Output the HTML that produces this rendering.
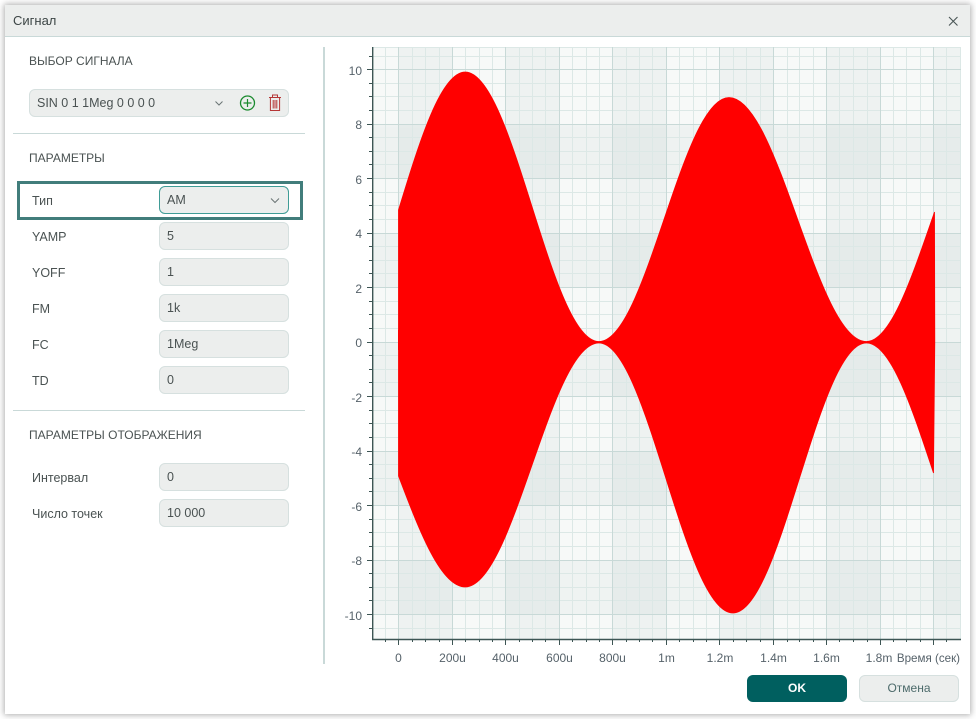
<!DOCTYPE html>
<html lang="ru"><head><meta charset="utf-8"><title>Сигнал</title>
<style>
html,body{margin:0;padding:0;width:976px;height:719px;overflow:hidden;background:#fff;font-family:"Liberation Sans",sans-serif;color:#3d4646;font-size:12.5px}
.win{position:absolute;left:5px;top:5px;width:965px;height:709px;background:#fff;box-shadow:0 0 6px 1px rgba(0,0,0,.32)}
.a{position:absolute}
.title{position:absolute;left:5px;top:5px;width:965px;height:31px;background:#eceeed;border-bottom:1px solid #c9d9d8;box-sizing:content-box}
.t{position:absolute;line-height:16px;white-space:nowrap}
.h{position:absolute;left:29px;line-height:16px;font-size:12px;color:#4a5252;white-space:nowrap}
.f{position:absolute;left:159px;width:130px;height:28px;box-sizing:border-box;background:#eceeed;border:1px solid #d6e0df;border-radius:6px;line-height:27px;padding-left:7px;color:#4a5252}
.l{position:absolute;left:32px;line-height:16px;color:#4a5252;white-space:nowrap}
.d{position:absolute;left:13px;width:292px;height:1px;background:#c9d9d8}
svg{position:absolute;left:0;top:0}
svg text{font-family:"Liberation Sans",sans-serif;font-size:12px;fill:#56626a}
</style></head><body>
<div class="win"></div>
<div class="title"></div>
<div class="t" style="left:13px;top:13px;font-size:13px">Сигнал</div>

<div class="h" style="top:53px">ВЫБОР СИГНАЛА</div>
<div class="f" style="left:29px;top:89px;width:260px">SIN 0 1 1Meg 0 0 0 0</div>
<div class="d" style="top:133px"></div>
<div class="h" style="top:150px">ПАРАМЕТРЫ</div>
<div class="a" style="left:17px;top:181px;width:286px;height:39px;box-sizing:border-box;border:3px solid #417d7b"></div>
<div class="l" style="top:193px">Тип</div>
<div class="f" style="top:186px;border-color:#3f9c96">AM</div>
<div class="l" style="top:229px">YAMP</div><div class="f" style="top:222px">5</div>
<div class="l" style="top:265px">YOFF</div><div class="f" style="top:258px">1</div>
<div class="l" style="top:301px">FM</div><div class="f" style="top:294px">1k</div>
<div class="l" style="top:337px">FC</div><div class="f" style="top:330px">1Meg</div>
<div class="l" style="top:373px">TD</div><div class="f" style="top:366px">0</div>
<div class="d" style="top:410px"></div>
<div class="h" style="top:427px">ПАРАМЕТРЫ ОТОБРАЖЕНИЯ</div>
<div class="l" style="top:470px">Интервал</div><div class="f" style="top:463px">0</div>
<div class="l" style="top:506px">Число точек</div><div class="f" style="top:499px">10 000</div>
<div class="a" style="left:323px;top:47px;width:2px;height:617px;background:#c9d9d8"></div>

<div class="a" style="left:747px;top:675px;width:100px;height:27px;background:#005f5f;border-radius:6px;color:#fff;font-weight:bold;font-size:12px;text-align:center;line-height:27px">OK</div>
<div class="a" style="left:859px;top:675px;width:100px;height:27px;box-sizing:border-box;background:#eceeed;border:1px solid #d6e0df;border-radius:6px;color:#4d6b6b;font-size:12px;text-align:center;line-height:25px">Отмена</div>

<svg width="976" height="719" viewBox="0 0 976 719">
<!-- close -->
<path d="M949 17L957.5 25.5M957.5 17L949 25.5" stroke="#4a5656" stroke-width="1.1" fill="none"/>
<!-- chevrons -->
<path d="M215.5 101.5L219 105L222.5 101.5" stroke="#6a7474" stroke-width="1" fill="none"/>
<path d="M271 198.5L275 202.5L279 198.5" stroke="#6a7474" stroke-width="1" fill="none"/>
<!-- plus -->
<circle cx="247.5" cy="103" r="7" stroke="#1a8a2e" stroke-width="1.3" fill="none"/>
<path d="M247.5 99V107M243.5 103H251.5" stroke="#1a8a2e" stroke-width="1.2" fill="none"/>
<!-- trash -->
<path d="M269 97.5H281M272.5 97V95H277.5V97M270.4 98V110.5H279.6V98M273.2 100V108.5M275 100V108.5M276.8 100V108.5" stroke="#b53636" stroke-width="1" fill="none"/>

<!-- plot bg -->
<rect x="373" y="47" width="588" height="592" fill="#f7f9f8"/>
<g fill="#0a3a3a" opacity=".032">
<rect x="398" y="47" width="54" height="592"/><rect x="505" y="47" width="54" height="592"/><rect x="612" y="47" width="54" height="592"/><rect x="719" y="47" width="54" height="592"/><rect x="826" y="47" width="54" height="592"/><rect x="933" y="47" width="28" height="592"/>
</g>
<g fill="#0a3a3a" opacity=".032">
<rect x="373" y="124" width="588" height="54"/><rect x="373" y="233" width="588" height="54"/><rect x="373" y="342" width="588" height="54"/><rect x="373" y="451" width="588" height="54"/><rect x="373" y="560" width="588" height="54"/>
</g>
<!-- minor grid -->
<path stroke="#dce8e6" stroke-width="1" fill="none" d="M385.5 47v592M412.5 47v592M425.5 47v592M439.5 47v592M465.5 47v592M479.5 47v592M492.5 47v592M519.5 47v592M532.5 47v592M545.5 47v592M572.5 47v592M586.5 47v592M599.5 47v592M626.5 47v592M639.5 47v592M652.5 47v592M679.5 47v592M693.5 47v592M706.5 47v592M733.5 47v592M746.5 47v592M760.5 47v592M787.5 47v592M799.5 47v592M813.5 47v592M839.5 47v592M853.5 47v592M867.5 47v592M893.5 47v592M906.5 47v592M920.5 47v592M946.5 47v592M960.5 47v592
M373 47.5h588M373 56.5h588M373 83.5h588M373 96.5h588M373 110.5h588M373 137.5h588M373 151.5h588M373 164.5h588M373 192.5h588M373 205.5h588M373 219.5h588M373 246.5h588M373 260.5h588M373 273.5h588M373 301.5h588M373 314.5h588M373 328.5h588M373 355.5h588M373 369.5h588M373 382.5h588M373 410.5h588M373 423.5h588M373 437.5h588M373 464.5h588M373 478.5h588M373 491.5h588M373 519.5h588M373 532.5h588M373 546.5h588M373 573.5h588M373 587.5h588M373 600.5h588M373 628.5h588"/>
<!-- major grid -->
<path stroke="#c8d9d7" stroke-width="1" fill="none" d="M398.5 47v592M452.5 47v592M505.5 47v592M559.5 47v592M612.5 47v592M666.5 47v592M719.5 47v592M773.5 47v592M826.5 47v592M880.5 47v592M933.5 47v592
M373 69.5h588M373 124.5h588M373 178.5h588M373 233.5h588M373 287.5h588M373 342.5h588M373 396.5h588M373 451.5h588M373 505.5h588M373 560.5h588M373 614.5h588"/>
<!-- signal -->
<path fill="#ff0000" stroke="#ff0000" stroke-width=".8" d="M398.5 210C420.1 139.3 441 72 465.2 72C513.9 72 550.2 341.5 598.9 341.5C646.3 341.5 681.6 97.5 729 97.5C779 97.5 816.4 341.5 866.4 341.5C890.6 341.5 911.4 278.6 934.5 212L934.8 342L933.5 473C911.4 406.4 890.6 343 866.4 343C817.7 343 781.3 613 733 613C683.9 613 647.6 343 598.9 343C550.2 343 513.9 587 465.2 587C441 587 420.1 532.9 398.5 476Z"/>
<rect x="398" y="330" width="1" height="20" fill="#ff0000"/>
<!-- axes -->
<path stroke="#3d5554" stroke-width="1.4" fill="none" d="M372.7 47V639.6M372 639.5H961"/>
<path stroke="#3d5554" stroke-width="1" fill="none" d="M367 69.5h6M367 124.5h6M367 178.5h6M367 233.5h6M367 287.5h6M367 342.5h6M367 396.5h6M367 451.5h6M367 505.5h6M367 560.5h6M367 614.5h6
M369 56.5h4M369 83.5h4M369 96.5h4M369 110.5h4M369 137.5h4M369 151.5h4M369 164.5h4M369 192.5h4M369 205.5h4M369 219.5h4M369 246.5h4M369 260.5h4M369 273.5h4M369 301.5h4M369 314.5h4M369 328.5h4M369 355.5h4M369 369.5h4M369 382.5h4M369 410.5h4M369 423.5h4M369 437.5h4M369 464.5h4M369 478.5h4M369 491.5h4M369 519.5h4M369 532.5h4M369 546.5h4M369 573.5h4M369 587.5h4M369 600.5h4M369 628.5h4
M398.5 639v6M452.5 639v6M505.5 639v6M559.5 639v6M612.5 639v6M666.5 639v6M719.5 639v6M773.5 639v6M826.5 639v6M880.5 639v6M933.5 639v6
M385.5 639v3M412.5 639v3M425.5 639v3M439.5 639v3M465.5 639v3M479.5 639v3M492.5 639v3M519.5 639v3M532.5 639v3M545.5 639v3M572.5 639v3M586.5 639v3M599.5 639v3M626.5 639v3M639.5 639v3M652.5 639v3M679.5 639v3M693.5 639v3M706.5 639v3M733.5 639v3M746.5 639v3M760.5 639v3M787.5 639v3M799.5 639v3M813.5 639v3M839.5 639v3M853.5 639v3M867.5 639v3M893.5 639v3M906.5 639v3M920.5 639v3M946.5 639v3"/>
<!-- labels -->
<g text-anchor="end">
<text x="362" y="75">10</text><text x="362" y="129">8</text><text x="362" y="184">6</text><text x="362" y="238">4</text><text x="362" y="293">2</text><text x="362" y="347">0</text><text x="362" y="402">-2</text><text x="362" y="456">-4</text><text x="362" y="511">-6</text><text x="362" y="565">-8</text><text x="362" y="620">-10</text>
</g>
<g text-anchor="middle">
<text x="398.5" y="662">0</text><text x="452.5" y="662">200u</text><text x="505.5" y="662">400u</text><text x="559.5" y="662">600u</text><text x="612.5" y="662">800u</text><text x="666.5" y="662">1m</text><text x="720" y="662">1.2m</text><text x="773.5" y="662">1.4m</text><text x="826.5" y="662">1.6m</text><text x="879" y="662">1.8m</text>
</g>
<text x="960" y="662" text-anchor="end" style="font-size:11.6px">Время (сек)</text>
</svg>
</body></html>
